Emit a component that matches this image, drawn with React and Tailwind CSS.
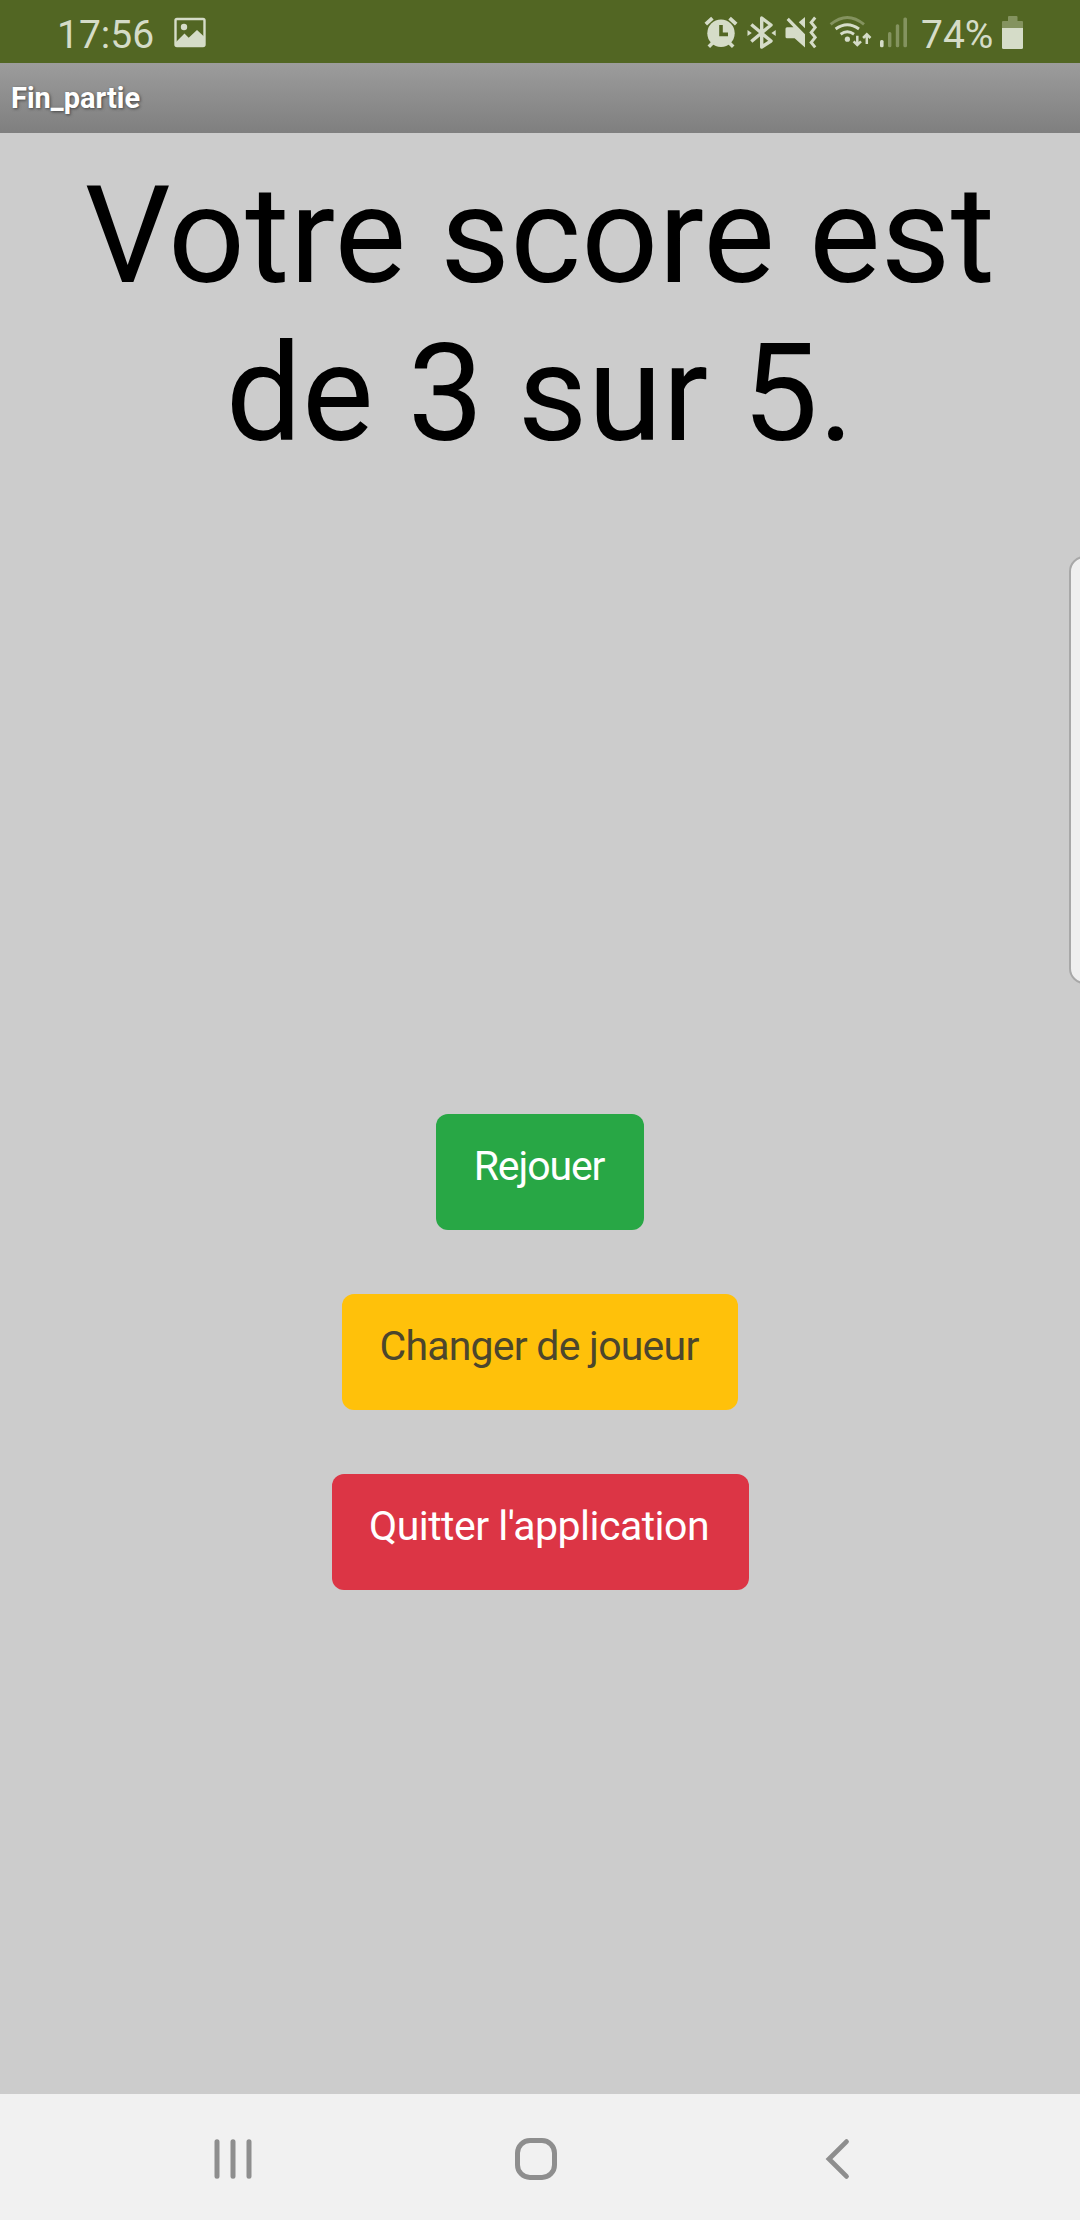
const ImageIcon = () => (
  <svg viewBox="174 17 32 31" className="h-[31px] w-8" fill="currentColor">
    <rect x="175.5" y="19" width="29" height="27" rx="1.5" fill="none" stroke="currentColor" strokeWidth="2.4" />
    <circle cx="184" cy="27" r="3.2" />
    <path d="M176 42L184.5 33.5L188.7 37.8L197 30L204.5 37V46H176Z" />
  </svg>
);

const AlarmIcon = () => (
  <svg viewBox="704 16 34 33" className="h-[33px] w-[34px]" fill="none" stroke="currentColor">
    <circle cx="721" cy="33.3" r="13.7" fill="currentColor" stroke="none" />
    <path d="M705.8 24.2L712.4 18.2M729.6 18.2L736.2 24.2" strokeWidth="3.8" />
    <path d="M708.8 46.8L714 41.6M733.2 46.8L728 41.6" strokeWidth="3.6" />
    <path d="M721 25V34.4H728" className="stroke-[#526623]" strokeWidth="3.6" />
  </svg>
);

const BluetoothIcon = () => (
  <svg viewBox="747 15 29 35" className="h-[35px] w-[29px]" fill="currentColor">
    <path
      d="M751.3 24.5L771 41L761.7 47V18L771 25L751.3 41.5"
      fill="none"
      stroke="currentColor"
      strokeWidth="3.4"
      strokeLinejoin="round"
    />
    <path d="M747.5 30V36L751.8 33ZM775.7 30V36L771.4 33Z" />
  </svg>
);

const VibrateMuteIcon = () => (
  <svg viewBox="785 16 32 33" className="h-[33px] w-8" fill="currentColor">
    <path d="M788.8 17.8L805 34.2V47.5L794.6 38.3H787Q785.5 38.3 785.5 36.8V28.7Q785.5 27.2 787 27.2H793.5L786.6 20Z" />
    <path d="M805 17V28.2L798.8 22.2Z" />
    <path d="M815.2 17.5L811.2 22.4L815.2 27.4L811.2 32.4L815.2 37.4L811.2 42.4L815.2 47.4" fill="none" stroke="currentColor" strokeWidth="3" />
  </svg>
);

const WifiIcon = () => (
  <svg viewBox="829 14 43 34" className="h-[34px] w-[43px]" fill="none" stroke="currentColor" strokeWidth="2.9">
    <path d="M830.6 24.4Q847.3 10.4 864 24.4" className="stroke-[#84935f]" />
    <path d="M835.6 29Q847.3 20.4 859 29" />
    <path d="M840.6 34.2Q847.3 29.4 854 34.2" />
    <circle cx="847.4" cy="39.2" r="2.6" fill="currentColor" stroke="none" />
    <path d="M857.3 35.8V44.6M853.6 41.3L857.3 45L861 41.3M866.8 44V34.6M863.1 38L866.8 34.3L870.5 38" strokeWidth="2.5" />
  </svg>
);

const SignalIcon = () => (
  <svg viewBox="880 17 27 31" className="h-[31px] w-[27px]" fill="#84935f">
    <rect x="880" y="40" width="3.6" height="7.3" rx="1.5" fill="currentColor" />
    <rect x="888" y="32" width="3.4" height="15.3" rx="1.5" />
    <rect x="895.8" y="24.3" width="3.4" height="23" rx="1.5" />
    <rect x="903.4" y="17.5" width="3.6" height="29.8" rx="1.5" />
  </svg>
);

const BatteryIcon = () => (
  <svg viewBox="1002 16 21 33" className="h-[33px] w-[21px]" fill="#84935f">
    <path d="M1008 21V17Q1008 16 1009 16H1016.5Q1017.5 16 1017.5 17V21H1022Q1023 21 1023 22V28H1002V22Q1002 21 1003 21Z" />
    <path d="M1002 28H1023V47.5Q1023 49 1021.5 49H1003.5Q1002 49 1002 47.5Z" fill="currentColor" />
  </svg>
);

const StatusBar = () => (
  <div className="flex h-[63px] items-start bg-[#526623] text-[39px] leading-[46px] text-[#d5dcc8]">
    <span className="ml-[57px] mt-3 w-[117px]">17:56</span>
    <div className="mt-[17px]"><ImageIcon /></div>
    <div className="ml-auto mr-[57px] flex items-start">
      <div className="mt-4"><AlarmIcon /></div>
      <div className="ml-[9px] mt-[15px]"><BluetoothIcon /></div>
      <div className="ml-[9px] mt-4"><VibrateMuteIcon /></div>
      <div className="ml-3 mt-[14px]"><WifiIcon /></div>
      <div className="ml-2 mt-[17px]"><SignalIcon /></div>
      <span className="ml-[14px] mt-3 w-[81px]">74%</span>
      <div className="mt-4"><BatteryIcon /></div>
    </div>
  </div>
);

const NavBar = () => (
  <div className="flex h-[126px] items-center justify-between bg-[#f1f1f1] pl-[212px] pr-[221px] pt-1 text-[#8e8e8e]">
    <svg viewBox="0 0 42 42" className="size-[42px]" fill="none" stroke="currentColor" strokeWidth="5" strokeLinecap="round">
      <path d="M5 3.7V38.3M21 3.7V38.3M37 3.7V38.3" />
    </svg>
    <svg viewBox="0 0 42 42" className="size-[42px]" fill="none" stroke="currentColor" strokeWidth="5">
      <rect x="2.5" y="2.5" width="37" height="37" rx="12.5" />
    </svg>
    <svg viewBox="0 0 42 42" className="size-[42px]" fill="none" stroke="currentColor" strokeWidth="4.8" strokeLinecap="round">
      <path d="M29.5 3.6L12 21L29.5 38.4" />
    </svg>
  </div>
);

const buttons = [
  { label: "Rejouer", style: "w-[208px] bg-[#28a745] tracking-[-1.1px] text-white" },
  { label: "Changer de joueur", style: "w-[396px] bg-[#ffc10a] tracking-[-0.77px] text-[#4c462d]" },
  { label: "Quitter l'application", style: "w-[417px] bg-[#dc3545] tracking-[-0.52px] text-white" },
];

const App = () => {
  return (
    <div className="relative flex h-[2220px] w-[1080px] flex-col overflow-hidden bg-[#cccccc] font-['Roboto',sans-serif]">
      <StatusBar />
      <header className="flex h-[70px] items-center bg-linear-to-b from-[#9c9c9c] to-[#7f7f7f] pl-[11px] pt-px text-[29px] font-bold leading-none text-white [text-shadow:1px_1px_3px_#444]">
        Fin_partie
      </header>

      <main className="flex flex-1 flex-col items-center pt-6">
        <h1 className="text-center text-[135px] leading-[158px] tracking-[0.3px] text-black">
          Votre score est
          <br />
          de 3 sur 5.
        </h1>
        <div className="mt-[641px] flex flex-col items-center gap-16">
          {buttons.map(({ label, style }) => (
            <button
              key={label}
              className={`flex h-[116px] justify-center whitespace-nowrap rounded-xl pr-[2px] pt-[28px] text-[41px] leading-[48px] ${style}`}
            >
              {label}
            </button>
          ))}
        </div>
      </main>

      <NavBar />

      {/* edge panel handle */}
      <div className="absolute -right-5 top-[556px] h-[428px] w-[31px] rounded-2xl border-2 border-[#a8a8a8] bg-[#efefef]" />
    </div>
  );
};

export default App;
